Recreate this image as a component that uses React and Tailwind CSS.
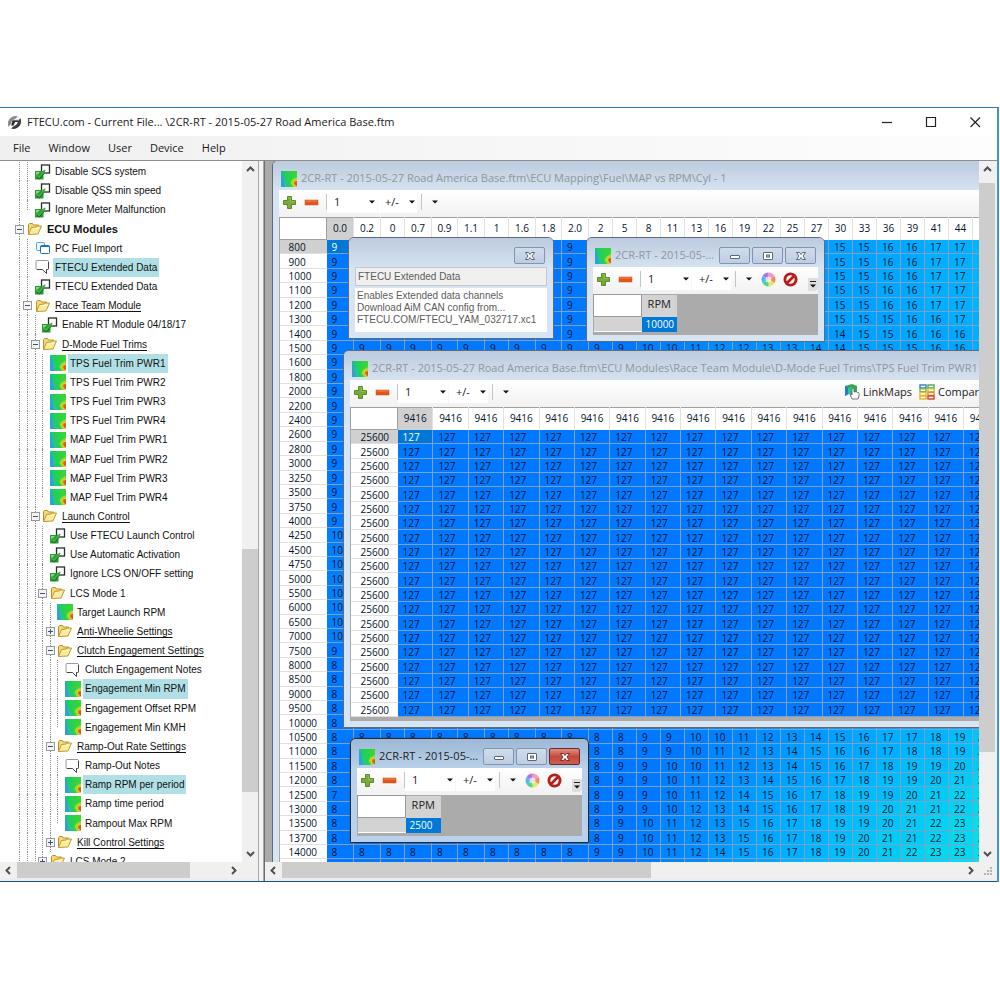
import React from "react";

/* ---------- icons ---------- */

function MapIcon({ id }) {
  return (
    <svg width="16" height="16" viewBox="0 0 16 16" className="shrink-0" aria-hidden="true">
      <defs>
        <linearGradient id={id} x1="0" x2="1" y1="0.1" y2="0">
          <stop offset="0" stopColor="#1bb8a8" />
          <stop offset="0.25" stopColor="#1fcf5c" />
          <stop offset="1" stopColor="#3fd62e" />
        </linearGradient>
      </defs>
      <rect width="16" height="16" fill={`url(#${id})`} />
      <path d="M0 3 L2.500 6 L5 16 H0 Z" fill="#2fa3d0" />
      <path d="M2 6 L4 9 L7 16 H4.500 Z" fill="#26c3a0" />
      <path d="M16 6 Q10 8 9.500 12 Q11 14 12 16 H16 Z" fill="#9ddc2c" />
      <path d="M16 8.500 Q12 9 12 12 L14 16 H16 Z" fill="#f0c52a" />
      <path d="M16 10 L13.500 10.500 L13 12.500 L15 15 H16 Z" fill="#dc5a26" />
    </svg>
  );
}

function FolderIcon() {
  return (
    <svg width="16" height="16" viewBox="0 0 16 16" className="shrink-0" aria-hidden="true">
      <path d="M1.500 13.500 V3.500 L2.500 2.500 H5.500 L6.500 4 H11.500 V6.500" fill="#f5d873" stroke="#b8912c" />
      <path d="M1.500 13.500 L4.500 6.500 L9 6 L10 5 H14.500 L11 13 Z" fill="#fdeb9c" stroke="#c09a30" />
      <path d="M5.500 8 L12.500 7" stroke="#fff8d5" />
    </svg>
  );
}

function CheckIcon() {
  return (
    <svg width="16" height="16" viewBox="0 0 16 16" className="shrink-0" aria-hidden="true">
      <rect x="6.500" y="1" width="8" height="8" fill="#fff" stroke="#2b2b2b" strokeWidth="1.300" />
      <rect x="0" y="7" width="8.500" height="8.500" fill="#2d9a35" />
      <path d="M1 8 H5 L1 12 Z" fill="#8fd28d" />
      <path d="M1.500 10.500 L4 13.500 L10 6" fill="none" stroke="#3cb043" strokeWidth="2" />
      <path d="M2 13.500 L4.500 15 L9 9.500" fill="none" stroke="#15671c" strokeWidth="1" />
    </svg>
  );
}

function NoteIcon() {
  return (
    <svg width="16" height="16" viewBox="0 0 16 16" className="shrink-0" aria-hidden="true">
      <path d="M2 1.500 H12.500 Q13.500 1.500 13.500 2.500 V9.500 Q13.500 10.500 12.500 10.500 H11.500 V14.500 L7.500 10.500 H2 Q1 10.500 1 9.500 V2.500 Q1 1.500 2 1.500 Z" fill="#fdfdfd" stroke="#9a9a9a" />
      <path d="M13.500 3 V9.500 Q13.500 10.500 12.500 10.500 H11.500 V14.500 L7.500 10.500 H2" fill="none" stroke="#444" />
    </svg>
  );
}

function WindowsIcon() {
  return (
    <svg width="16" height="16" viewBox="0 0 16 16" className="shrink-0" aria-hidden="true">
      <rect x="1.500" y="2.500" width="8" height="8" rx="1" fill="#eef6fd" stroke="#5aa0dc" />
      <rect x="5.500" y="5.500" width="9" height="8" rx="1" fill="#fff" stroke="#1d6fc0" />
      <path d="M5.500 6.500 H14.500" stroke="#1d6fc0" />
    </svg>
  );
}

function PlusIcon() {
  return (
    <svg width="15" height="15" viewBox="0 0 15 15" aria-hidden="true">
      <path d="M5.500 1.500 H9.500 V5.500 H13.500 V9.500 H9.500 V13.500 H5.500 V9.500 H1.500 V5.500 H5.500 Z" fill="#7aab3a" stroke="#5b8a2c" />
      <path d="M6.500 2.500 H8.500 V6.500 H12.500" fill="none" stroke="#93bd55" />
    </svg>
  );
}

function MinusIcon() {
  return (
    <svg width="15" height="15" viewBox="0 0 15 15" aria-hidden="true">
      <rect x="1" y="5" width="13" height="5" fill="#e0561c" stroke="#c8501f" strokeWidth="0.500" />
      <path d="M1.500 6 H13.500" stroke="#f08a52" />
    </svg>
  );
}

function WheelIcon() {
  return (
    <svg width="15" height="15" viewBox="0 0 15 15" aria-hidden="true">
      <path d="M7.500 7.500 V0.500 A7 7 0 0 1 13.500 4 Z" fill="#f49ac0" />
      <path d="M7.500 7.500 L13.500 4 A7 7 0 0 1 13.500 11 Z" fill="#f28b6a" />
      <path d="M7.500 7.500 L13.500 11 A7 7 0 0 1 7.500 14.500 Z" fill="#ece65a" />
      <path d="M7.500 7.500 V14.500 A7 7 0 0 1 1.500 11 Z" fill="#4fd78a" />
      <path d="M7.500 7.500 L1.500 11 A7 7 0 0 1 1.500 4 Z" fill="#55b7ef" />
      <path d="M7.500 7.500 L1.500 4 A7 7 0 0 1 7.500 0.500 Z" fill="#b472ea" />
      <circle cx="7.500" cy="7.500" r="3" fill="#fff" opacity="0.650" />
    </svg>
  );
}

function StopIcon() {
  return (
    <svg width="15" height="15" viewBox="0 0 15 15" aria-hidden="true">
      <circle cx="7.500" cy="7.500" r="7" fill="#b3201c" />
      <circle cx="7.500" cy="7.500" r="4.200" fill="#fbeceb" />
      <path d="M4 11 L11 4" stroke="#b3201c" strokeWidth="2.600" />
    </svg>
  );
}

function Caret() {
  return (
    <svg width="6" height="4" viewBox="0 0 6 4" aria-hidden="true">
      <path d="M0 0.500 H6 L3 3.500 Z" fill="#111" />
    </svg>
  );
}

function LinkMapsIcon() {
  return (
    <svg width="17" height="16" viewBox="0 0 17 16" aria-hidden="true">
      <path d="M1 2 L8 0 L13 2 V10 H5 L1 12 Z" fill="#35a84a" />
      <path d="M1 2 L4 4 V10 L1 12 Z" fill="#2b78c9" />
      <path d="M4 4 L9 3 L8 10 H4 Z" fill="#2fc0a0" />
      <path d="M8 15 L6 10.500 Q7 9.500 8 11 V4.500 Q9 3.500 10 4.500 V8 Q11 7 12 8 Q13 7.500 13.500 8.500 Q15 8 15 9.500 V12 L14 15 Z" fill="#fff" stroke="#555" strokeWidth="0.800" />
    </svg>
  );
}

function CompareIcon() {
  return (
    <svg width="16" height="16" viewBox="0 0 16 16" aria-hidden="true">
      <g fill="#fff" strokeWidth="1.400">
        <rect x="1" y="1" width="6" height="3" stroke="#3a78c0" />
        <rect x="9" y="1" width="6" height="3" stroke="#4aa848" />
        <rect x="1" y="4.700" width="6" height="3" stroke="#6fb84a" />
        <rect x="9" y="4.700" width="6" height="3" stroke="#cbbf30" />
        <rect x="1" y="8.400" width="6" height="3" stroke="#e0c02c" />
        <rect x="9" y="8.400" width="6" height="3" stroke="#e8902a" />
        <rect x="1" y="12" width="6" height="3" stroke="#eab028" />
        <rect x="9" y="12" width="6" height="3" stroke="#d8402a" />
      </g>
    </svg>
  );
}

function AppIcon() {
  return (
    <svg width="15" height="15" viewBox="0 0 15 15" aria-hidden="true">
      <path d="M1.500 12 Q-0.500 5 5 2 Q8 0.500 11 1.500 L8 4 Q4.500 5 4 9 Z" fill="#8a8a8a" />
      <path d="M13.500 3 Q15.500 10 10 13 Q7 14.500 4 13.500 L7 11 Q10.500 10 11 6 Z" fill="#3c3c3c" />
      <path d="M4 9 L5.500 5 L11.500 4.500 L10.500 7 H8 L7 10 L4.500 11.500 Z" fill="#b4b4b4" />
      <path d="M5.500 5.500 H11.500 L10.500 7 H8 L6.500 10.500 H4.500 Z" fill="#2d2d2d" />
    </svg>
  );
}

/* ---------- tree ---------- */

const TREE = [
  [1, "check", "Disable SCS system"],
  [1, "check", "Disable QSS min speed"],
  [1, "check", "Ignore Meter Malfunction", "last"],
  [0, "open", "ECU Modules", "bold"],
  [1, "windows", "PC Fuel Import"],
  [1, "note", "FTECU Extended Data", "on"],
  [1, "check", "FTECU Extended Data"],
  [1, "open", "Race Team Module", "line"],
  [2, "check", "Enable RT Module 04/18/17"],
  [2, "open", "D-Mode Fuel Trims", "line"],
  [3, "map", "TPS Fuel Trim PWR1", "on"],
  [3, "map", "TPS Fuel Trim PWR2"],
  [3, "map", "TPS Fuel Trim PWR3"],
  [3, "map", "TPS Fuel Trim PWR4"],
  [3, "map", "MAP Fuel Trim PWR1"],
  [3, "map", "MAP Fuel Trim PWR2"],
  [3, "map", "MAP Fuel Trim PWR3"],
  [3, "map", "MAP Fuel Trim PWR4", "last"],
  [2, "open", "Launch Control", "line"],
  [3, "check", "Use FTECU Launch Control"],
  [3, "check", "Use Automatic Activation"],
  [3, "check", "Ignore LCS ON/OFF setting"],
  [3, "open", "LCS Mode 1"],
  [4, "map", "Target Launch RPM"],
  [4, "closed", "Anti-Wheelie Settings", "line"],
  [4, "open", "Clutch Engagement Settings", "line"],
  [5, "note", "Clutch Engagement Notes"],
  [5, "map", "Engagement Min RPM", "on"],
  [5, "map", "Engagement Offset RPM"],
  [5, "map", "Engagement Min KMH", "last"],
  [4, "open", "Ramp-Out Rate Settings", "line"],
  [5, "note", "Ramp-Out Notes"],
  [5, "map", "Ramp RPM per period", "on"],
  [5, "map", "Ramp time period"],
  [5, "map", "Rampout Max RPM", "last"],
  [4, "closed", "Kill Control Settings", "line"],
  [3, "closed", "LCS Mode 2"],
];

const INDENTS = ["w-[8px]", "w-[8px]", "w-[7px]", "w-[8px]", "w-[7px]", "w-[8px]"];

const LABEL_STYLE = {
  bold: "text-[11px] font-bold",
  on: "bg-[#b0e0e6]",
  line: "underline underline-offset-2",
};

function TreeRow({ index, depth, kind, label, mark }) {
  const folder = kind === "open" || kind === "closed";
  return (
    <li className="flex items-center pl-[19px]">
      {INDENTS.slice(0, depth + 1).map((w, i) => (
        <span key={i} className={`${w} relative flex shrink-0 items-center self-stretch`}>
          <span
            className={`w-px self-start border-l border-dotted border-[#8a8a8a] ${
              mark === "last" && i === depth ? "h-1/2" : "h-full"
            }`}
          />
          {folder && i === depth && (
            <button
              aria-label={kind === "open" ? `Collapse ${label}` : `Expand ${label}`}
              className="absolute -left-1 flex size-[9px] items-center justify-center border border-[#9a9a9a] bg-[#f4f4f4]"
            >
              <svg width="5" height="5" viewBox="0 0 5 5" aria-hidden="true">
                <path d={kind === "open" ? "M0 2.500 H5" : "M0 2.500 H5 M2.500 0 V5"} stroke="#3c4f8c" />
              </svg>
            </button>
          )}
        </span>
      ))}
      {folder && <FolderIcon />}
      {kind === "check" && <CheckIcon />}
      {kind === "note" && <NoteIcon />}
      {kind === "windows" && <WindowsIcon />}
      {kind === "map" && <MapIcon id={`tree-map-${index}`} />}
      <button className={`ml-[2px] self-stretch whitespace-nowrap px-[2px] text-[#111] ${LABEL_STYLE[mark] || ""}`}>
        {label}
      </button>
    </li>
  );
}

/* ---------- scroll bars ---------- */

const ARROWS = {
  up: "M1 6 L4.500 2.500 L8 6",
  down: "M1 3 L4.500 6.500 L8 3",
  left: "M6 1 L2.500 4.500 L6 8",
  right: "M3 1 L6.500 4.500 L3 8",
};

function ScrollButton({ dir }) {
  return (
    <button aria-label={`Scroll ${dir}`} className="flex size-[17px] shrink-0 items-center justify-center">
      <svg width="9" height="9" viewBox="0 0 9 9" aria-hidden="true">
        <path d={ARROWS[dir]} fill="none" stroke="#505050" strokeWidth="2" />
      </svg>
    </button>
  );
}

function VScroll({ before, size }) {
  return (
    <div className="flex w-4 shrink-0 flex-col items-center bg-[#f0f0f0]">
      <ScrollButton dir="up" />
      <div className="w-full flex-1">
        <div style={{ height: `${before}%` }} />
        <div className="w-full bg-[#cdcdcd]" style={{ height: `${size}%` }} />
      </div>
      <ScrollButton dir="down" />
    </div>
  );
}

function HScroll({ size }) {
  return (
    <div className="flex h-4 min-w-0 flex-1 items-center bg-[#f0f0f0]">
      <ScrollButton dir="left" />
      <div className="h-full flex-1">
        <div className="h-full bg-[#cdcdcd]" style={{ width: `${size}%` }} />
      </div>
      <ScrollButton dir="right" />
    </div>
  );
}

/* ---------- child windows ---------- */

function CaptionButton({ kind, active }) {
  const red = kind === "close" && active;
  return (
    <button
      aria-label={kind}
      className={`flex h-[17px] w-[31px] items-center justify-center rounded-[2px] border ${
        red
          ? "border-[#6b2a2a] bg-linear-to-b from-[#dc8f84] via-[#c8473a] to-[#c9604f]"
          : "border-[#8494ad] bg-linear-to-b from-[#cfdcec] to-[#bdcde2]"
      }`}
    >
      <svg width="12" height="10" viewBox="0 0 12 10" fill="#fff" stroke="#5b6577" aria-hidden="true">
        {kind === "minimize" && <rect x="1.500" y="4.500" width="9" height="3" rx="0.500" />}
        {kind === "maximize" && (
          <>
            <rect x="1.500" y="1.500" width="9" height="7" rx="0.500" />
            <rect x="4.500" y="4" width="3" height="2" fill="#c5d3e6" />
          </>
        )}
        {kind === "close" && (
          <path
            d="M1.500 1.500 H4.500 L6 3.500 L7.500 1.500 H10.500 L8 5 L10.500 8.500 H7.500 L6 6.500 L4.500 8.500 H1.500 L4 5 Z"
            stroke={red ? "#7a2f2f" : "#5b6577"}
          />
        )}
      </svg>
    </button>
  );
}

function Toolbar({ compact, linked, name }) {
  return (
    <div className="flex h-[27px] items-center bg-linear-to-b from-white to-[#f1f1f1] pb-[3px] pl-[3px] text-[11px] text-[#222]">
      <button aria-label="Increase"><PlusIcon /></button>
      <button aria-label="Decrease" className="ml-[7px]"><MinusIcon /></button>
      <span className="ml-[7px] h-4 w-px bg-[#c4c4c4]" />
      <span className="relative flex w-[50px] items-center">
        <select aria-label={`Step for ${name}`} className="h-[22px] w-full appearance-none bg-white pl-[7px] text-[11px]">
          <option>1</option>
        </select>
        <span className="pointer-events-none absolute right-[2px]"><Caret /></span>
      </span>
      <button className="ml-px flex h-[22px] w-[39px] items-center justify-between bg-white pr-[2px] pl-[7px]">
        <span>+/-</span>
        <Caret />
      </button>
      <span className="ml-[4px] h-4 w-px bg-[#c4c4c4]" />
      <button aria-label="More" className="ml-[6px] flex w-[14px] justify-center"><Caret /></button>
      {compact && (
        <>
          <button aria-label="Colors" className="ml-[5px]"><WheelIcon /></button>
          <button aria-label="Cancel" className="ml-[7px]"><StopIcon /></button>
          <button
            aria-label="Overflow"
            className="ml-auto flex h-[13px] w-[10px] flex-col items-center justify-center gap-[2px] self-end rounded-br-[4px] bg-[#dedede]"
          >
            <span className="h-px w-[6px] bg-[#222]" />
            <Caret />
          </button>
        </>
      )}
      {linked && (
        <>
          <button className="ml-[331px] flex items-center gap-[2px]"><LinkMapsIcon />LinkMaps</button>
          <button className="ml-[7px] flex items-center gap-[3px]"><CompareIcon />Compare</button>
        </>
      )}
    </div>
  );
}

function MdiWindow({ place, title, active, controls, icon, children }) {
  return (
    <section
      className={`absolute flex flex-col rounded-t-[6px] border px-[6px] pb-[6px] ${place} ${
        active
          ? "border-[#1f2a38] bg-[#b9d1ea] shadow-[0_0_2px_#555]"
          : "border-[#5d6b7c] bg-[#d7e4f2]"
      }`}
    >
      <header
        className={`-mx-[6px] flex h-[29px] shrink-0 items-center rounded-t-[5px] px-2 pt-[6px] ${
          active ? "bg-linear-to-b from-[#9db8d6] to-[#b9d1ea]" : "bg-linear-to-b from-[#bccbde] to-[#d5e2f0]"
        }`}
      >
        {icon && <MapIcon id={icon} />}
        <h2 className={`ml-[4px] flex-1 text-[11px] whitespace-nowrap ${active ? "text-[#222]" : "text-[#8f969f]"}`}>
          {title}
        </h2>
        {controls && (
          <div className="flex gap-[2px]">
            {controls.map((c) => (
              <CaptionButton key={c} kind={c} active={active} />
            ))}
          </div>
        )}
      </header>
      {children}
    </section>
  );
}

function RpmWindow({ place, value, active, icon }) {
  return (
    <MdiWindow place={place} title="2CR-RT - 2015-05-..." active={active} icon={icon} controls={["minimize", "maximize", "close"]}>
      <Toolbar compact name={`RPM ${value}`} />
      <div className="h-[41px] bg-[#ababab]">
        <table className="border-collapse text-[11px]">
          <thead>
            <tr className="h-[22px]">
              <td className="w-[48px] border border-[#9a9a9a] bg-white p-0" />
              <th scope="col" className="w-[35px] bg-[#d3d3d3] p-0 pb-[2px] font-normal text-[#222]">RPM</th>
            </tr>
          </thead>
          <tbody>
            <tr className="h-[15px]">
              <th className="border-b border-white bg-[#d3d3d3] p-0" aria-label="Row" />
              <td className="bg-[#0078d7] p-0 pl-[4px] text-[10px] leading-[14px] text-white">{value}</td>
            </tr>
          </tbody>
        </table>
      </div>
    </MdiWindow>
  );
}

/* ---------- map data ---------- */

const MAIN_COLS = [
  "0.0", "0.2", "0", "0.7", "0.9", "1.1", "1", "1.6", "1.8", "2.0",
  "2", "5", "8", "11", "13", "16", "19", "22", "25", "27",
  "30", "33", "36", "39", "41", "44", "",
];
const MAIN_WIDTHS = [27, 27, 24, 27, 26, 27, 24, 27, 26, 27];

const RPMS = [
  800, 900, 1000, 1100, 1200, 1300, 1400, 1500, 1600, 1800, 2000, 2200, 2400, 2600, 2800,
  3000, 3250, 3500, 3750, 4000, 4250, 4500, 4750, 5000, 5500, 6000, 6500, 7000, 7500, 8000,
  8500, 9000, 9500, 10000, 10500, 11000, 11500, 12000, 12500, 13000, 13500, 13700, 14000, 14500,
];

const TOP = [9, 10, 10, 11, 11, 12, 12, 13, 14, 14, 15, 15, 16, 16, 17, 17, 18];
const TAILS = {
  1300: [9, 9, 10, 10, 11, 12, 12, 13, 13, 14, 15, 15, 15, 16, 16, 17, 17],
  1400: [9, 9, 10, 10, 11, 12, 12, 13, 13, 14, 14, 15, 15, 16, 16, 16, 17],
  1500: [9, 9, 10, 10, 11, 12, 12, 13, 13, 14, 14, 15, 15, 15, 16, 16, 17],
  10500: [8, 8, 9, 9, 10, 10, 11, 12, 13, 14, 15, 16, 17, 17, 18, 19, 20],
  11000: [8, 8, 9, 9, 10, 11, 12, 13, 14, 15, 16, 16, 17, 18, 18, 19, 20],
  11500: [8, 9, 9, 10, 10, 11, 12, 13, 14, 15, 16, 17, 18, 19, 19, 20, 21],
  12000: [8, 9, 9, 10, 11, 12, 13, 14, 15, 16, 17, 18, 19, 19, 20, 21, 22],
  12500: [8, 9, 9, 10, 11, 12, 14, 15, 16, 17, 18, 19, 19, 20, 21, 22, 23],
  13000: [8, 9, 9, 10, 12, 13, 14, 15, 16, 17, 18, 19, 20, 21, 21, 22, 23],
  13500: [8, 9, 10, 11, 12, 13, 15, 16, 17, 18, 19, 19, 20, 21, 22, 23, 24],
  13700: [8, 9, 10, 11, 12, 13, 15, 16, 17, 18, 19, 20, 21, 21, 22, 23, 24],
  14000: [9, 9, 10, 11, 12, 14, 15, 16, 17, 18, 19, 20, 21, 22, 23, 23, 24],
  14500: [9, 9, 10, 11, 12, 14, 15, 16, 18, 19, 19, 20, 21, 22, 23, 24, 25],
};

function headValue(rpm) {
  if (rpm === 12500) return 7;
  if (rpm >= 8000) return 8;
  if (rpm >= 4250 && rpm <= 7000) return 10;
  return 9;
}

function mainRow(rpm) {
  return [...Array(10).fill(headValue(rpm)), ...(TAILS[rpm] || TOP)];
}

function heat(v) {
  if (v <= 9) return "rgb(0,120,255)";
  const blue = v > 18 ? 255 - (v - 18) * 3 : 255;
  return `rgb(0,${120 + (v - 9) * 7},${blue})`;
}

function MapTable({ size, columns, widths, defaultWidth, rows, cell }) {
  return (
    <table className={`table-fixed border-collapse text-[10px] text-[#04142e] ${size}`}>
      <colgroup>
        <col style={{ width: 47 }} />
        {columns.map((_, i) => (
          <col key={i} style={{ width: widths[i] || defaultWidth }} />
        ))}
      </colgroup>
      <thead>
        <tr className="h-[22px]">
          <td className="border border-[#a0a0a0] bg-white p-0" />
          {columns.map((c, i) => (
            <th
              key={i}
              scope="col"
              className={`overflow-hidden border-t border-r border-t-[#a0a0a0] border-r-[#e2e2e2] p-0 font-normal ${
                i === 0 ? "bg-[#d0d0d0]" : "bg-white"
              }`}
            >
              {c}
            </th>
          ))}
        </tr>
      </thead>
      <tbody>
        {rows.map((r, y) => (
          <tr key={y}>
            <th
              scope="row"
              className={`border-b border-[#e0e0e0] p-0 pt-[2px] text-left leading-[11px] font-normal ${
                y === 0 ? "bg-[#d0d0d0]" : "bg-white"
              } ${cell}`}
            >
              {r.label}
            </th>
            {r.values.map((v, x) => (
              <td
                key={x}
                className={`overflow-hidden border-r border-b border-[#7f9fc4] p-0 pt-[2px] pl-[5px] leading-[11px] ${
                  x === 0 && y === 0 ? "text-white" : ""
                }`}
                style={{ backgroundColor: x === 0 && y === 0 ? "#0078d7" : v === 127 ? "#0078ff" : heat(v) }}
              >
                {v}
              </td>
            ))}
          </tr>
        ))}
      </tbody>
    </table>
  );
}

const MAIN_ROWS = RPMS.map((rpm) => ({ label: rpm, values: mainRow(rpm) }));
const TRIM_ROWS = Array.from({ length: 20 }, () => ({ label: 25600, values: Array(18).fill(127) }));

/* ---------- page ---------- */

export default function App() {
  return (
    <div className="flex h-screen flex-col bg-white pt-[107px] pb-[118px] font-['Open_Sans','Noto_Sans',sans-serif] text-[#1a1a1a]">
      <div className="mr-px flex min-h-0 flex-1 flex-col border-t border-r-2 border-t-[#2a7ab8] border-r-[#4c93bd]">
        <header className="flex h-[28px] shrink-0 items-center pl-[7px]">
          <AppIcon />
          <h1 className="ml-[5px] flex-1 text-[11px]">FTECU.com - Current File... \2CR-RT - 2015-05-27 Road America Base.ftm</h1>
          <div className="flex items-center">
            {[
              ["Minimize", "M1 6.500 H11"],
              ["Maximize", "M1.500 1.500 H10.500 V10.500 H1.500 Z"],
              ["Close", "M1.500 1.500 L11 11 M11 1.500 L1.500 11"],
            ].map(([label, d]) => (
              <button key={label} aria-label={label} className="flex h-[28px] w-[44px] items-center justify-center">
                <svg width="12" height="12" viewBox="0 0 12 12" aria-hidden="true">
                  <path d={d} fill="none" stroke="#222" strokeWidth="1.200" />
                </svg>
              </button>
            ))}
          </div>
        </header>
        <nav className="flex h-[24px] shrink-0 items-center gap-[18px] bg-linear-to-r from-[#f0f0f0] to-[#fdfdfd] pl-[13px] text-[11px]">
          {["File", "Window", "User", "Device", "Help"].map((m) => (
            <button key={m}>{m}</button>
          ))}
        </nav>

        <main className="flex min-h-0 flex-1 border-t border-[#8c8c8c]">
          <aside className="flex w-[258px] shrink-0 flex-col">
            <div className="flex min-h-0 flex-1">
              <div className="min-w-0 flex-1 overflow-hidden bg-white pt-px">
                <ul className="grid h-[709px] auto-rows-fr font-['Liberation_Sans',Arial,sans-serif] text-[10px]">
                  {TREE.map(([depth, kind, label, mark], i) => (
                    <TreeRow key={i} index={i} depth={depth} kind={kind} label={label} mark={mark} />
                  ))}
                </ul>
              </div>
              <VScroll before={55.600} size={36.500} />
            </div>
            <div className="flex">
              <HScroll size={83} />
              <div className="size-4 bg-[#f0f0f0]" />
            </div>
            <div className="h-[3px] bg-[#e8eef4]" />
          </aside>
          <div className="w-[6px] shrink-0 border-x border-[#a8a8a8] bg-[#f4f4f4]" />

          <div className="flex min-w-0 flex-1 flex-col border-l border-[#6e6e6e]">
            <div className="flex min-h-0 flex-1">
              <div className="relative min-w-0 flex-1 overflow-hidden bg-[#ababab]">
                <MdiWindow
                  place="-top-px left-[7px] w-[760px]"
                  title="2CR-RT - 2015-05-27 Road America Base.ftm\ECU Mapping\Fuel\MAP vs RPM\Cyl - 1"
                  icon="win-main"
                >
                  <Toolbar name="MAP vs RPM" />
                  <div className="bg-[#ababab]">
                    <MapTable
                      size="h-[657px] w-[717px]"
                      columns={MAIN_COLS}
                      widths={MAIN_WIDTHS}
                      defaultWidth={24}
                      rows={MAIN_ROWS}
                      cell="pl-[9px]"
                    />
                  </div>
                </MdiWindow>

                <MdiWindow
                  place="top-[189px] left-[78px] w-[720px]"
                  title="2CR-RT - 2015-05-27 Road America Base.ftm\ECU Modules\Race Team Module\D-Mode Fuel Trims\TPS Fuel Trim PWR1"
                  icon="win-trim"
                >
                  <Toolbar linked name="TPS Fuel Trim" />
                  <div className="bg-[#ababab] pb-[4px]">
                    <MapTable
                      size="h-[310px] w-[685px]"
                      columns={Array(18).fill("9416")}
                      widths={[]}
                      defaultWidth={undefined}
                      rows={TRIM_ROWS}
                      cell="pl-[10px]"
                    />
                  </div>
                </MdiWindow>

                <MdiWindow place="top-[76px] left-[83px] w-[206px]" title="" controls={["close"]}>
                  <div className="flex flex-col gap-[2px] font-['Liberation_Sans',Arial,sans-serif] text-[10px] text-[#5c5c5c]">
                    <input
                      aria-label="Note title"
                      readOnly
                      value="FTECU Extended Data"
                      className="h-[19px] w-full border border-[#c4c8cc] bg-[#f0f0f0] px-[2px]"
                    />
                    <textarea
                      aria-label="Note text"
                      readOnly
                      rows={3}
                      value={"Enables Extended data channels\nDownload AiM CAN config from...\nFTECU.COM/FTECU_YAM_032717.xc1"}
                      className="h-[44px] w-full resize-none overflow-hidden bg-white px-[2px] pt-[2px] leading-[12px]"
                    />
                  </div>
                </MdiWindow>

                <RpmWindow place="top-[76px] left-[321px] w-[239px]" value="10000" icon="win-rpm-a" />
                <RpmWindow place="top-[577px] left-[85px] w-[239px]" value="2500" active icon="win-rpm-b" />
              </div>
              <VScroll before={0.800} size={85.300} />
            </div>
            <div className="flex">
              <HScroll size={54.300} />
              <div className="flex size-4 items-end justify-end bg-[#f0f0f0] p-[2px]">
                <svg width="9" height="9" viewBox="0 0 9 9" fill="#b4b4b4" aria-hidden="true">
                  <path d="M6 0h2v2h-2z M6 3h2v2h-2z M6 6h2v2h-2z M3 3h2v2h-2z M3 6h2v2h-2z M0 6h2v2h-2z" />
                </svg>
              </div>
            </div>
            <div className="h-[3px] bg-[#e8eef4]" />
          </div>
          <div className="w-[2px] shrink-0 bg-[#eaf0f6]" />
        </main>
        <div className="h-px shrink-0 bg-[#1d4f7c]" />
      </div>
    </div>
  );
}
